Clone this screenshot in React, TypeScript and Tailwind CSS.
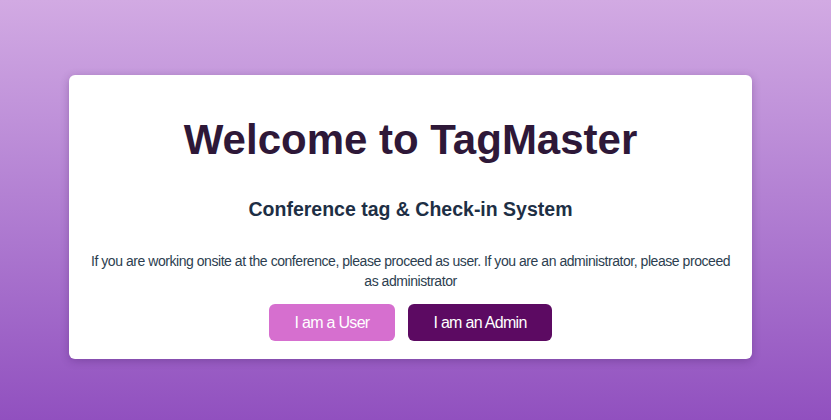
export default function App() {
  return (
    <div className="min-h-screen w-full bg-gradient-to-b from-[#d2aae3] to-[#9150bf] pt-[75px] font-['Liberation_Sans',Arial,sans-serif]">
      <div className="ml-[69px] w-[683px] rounded-md bg-white px-4 pt-[41px] pb-[18px] text-center shadow-[0_2px_8px_rgba(60,20,90,0.3)]">
        <h1 className="text-[42px] leading-[48px] font-bold text-[#2e1838]">Welcome to TagMaster</h1>
        <h2 className="mt-[33px] text-[19.5px] leading-[24px] font-bold text-[#1e2f45]">
          Conference tag &amp; Check-in System
        </h2>
        <p className="mt-[30px] text-[14px] leading-[20px] tracking-[-0.45px] text-[#2c3e50]">
          If you are working onsite at the conference, please proceed as user. If you are an administrator, please proceed as administrator
        </p>
        <div className="mt-[13px] flex justify-center gap-[13px]">
          <button className="h-[37px] w-[126px] rounded-md bg-[#d66fcf] text-[16px] tracking-[-0.7px] text-white">I am a User</button>
          <button className="h-[37px] w-[144px] rounded-md bg-[#5c0a62] text-[16px] tracking-[-0.7px] text-white">I am an Admin</button>
        </div>
      </div>
    </div>
  );
}
